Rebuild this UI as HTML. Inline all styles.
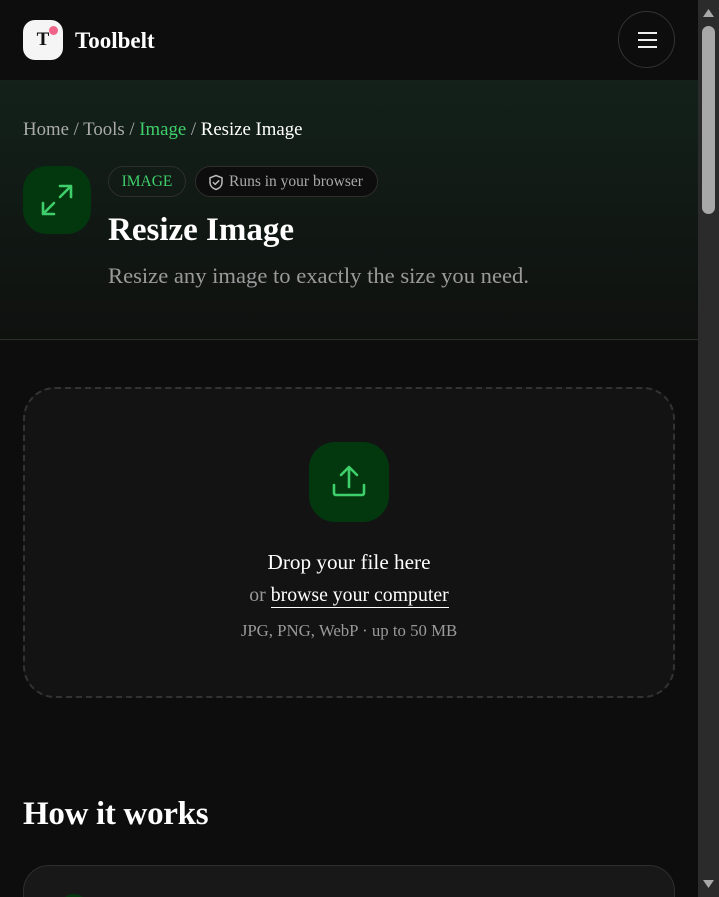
<!DOCTYPE html>
<html><head><meta charset="utf-8"><style>
*{box-sizing:border-box;margin:0;padding:0}
html,body{width:719px;height:897px;overflow:hidden;background:#0d0d0d;font-family:"Liberation Serif",serif;color:#fff}
.page{position:absolute;left:0;top:0;width:698px;height:897px;background:#0d0d0d;overflow:hidden}
.sb{position:absolute;left:698px;top:0;width:21px;height:897px;background:#2b2b2b}
.thumb{position:absolute;left:702px;top:26px;width:13px;height:188px;border-radius:7px;background:#a8a8a8}
header{position:absolute;left:0;top:0;width:698px;height:80px;background:#0d0d0d}
.logo{position:absolute;left:23px;top:20px;width:40px;height:40px;border-radius:12px;background:#f5f5f5;color:#111;font-weight:bold;font-size:19px;text-align:center;line-height:40px}
.dot{position:absolute;left:26px;top:6px;width:9px;height:9px;border-radius:50%;background:#f0648a}
.brand{position:absolute;left:75px;top:28px;font-size:23px;font-weight:bold}
.menu{position:absolute;left:618px;top:11px;width:57px;height:57px;border-radius:50%;border:1px solid #333}
.menu i{position:absolute;left:19px;width:19px;height:2px;background:#eee}
.hero{position:absolute;left:0;top:80px;width:698px;height:260px;background:linear-gradient(#13211a,#0f110f);border-bottom:1px solid #2e2e2e}
.bc{position:absolute;left:23px;top:39px;font-size:18.8px;color:#aaa}
.hi{position:absolute;left:23px;top:86px;width:68px;height:68px;border-radius:24px;background:#03380f}
.pill{position:absolute;top:86px;height:31px;border-radius:16px;border:1px solid #2e2e2e;font-size:15.5px;line-height:29px;padding:0 12px}
h1{position:absolute;left:108px;top:132px;font-size:33px;font-weight:bold}
.sub{position:absolute;left:108px;top:183px;font-size:22.6px;color:#9a9a9a}
.drop{position:absolute;left:23px;top:387px;width:652px;height:311px;border:2px dashed #333;border-radius:32px;background:#131313;text-align:center}
.ui{position:absolute;left:284px;top:53px;width:80px;height:80px;border-radius:26px;background:#03380f}
h2{position:absolute;left:23px;top:796px;font-size:33px;font-weight:bold;letter-spacing:-0.3px}
.card{position:absolute;left:23px;top:865px;width:652px;height:80px;border-radius:26px;border:1px solid #2e2e2e;background:#181818}
</style></head><body>
<div class="page">
<header>
<div class="logo">T<div class="dot"></div></div>
<div class="brand">Toolbelt</div>
<div class="menu"><i style="top:20px"></i><i style="top:27px"></i><i style="top:34px"></i></div>
</header>
<div class="hero">
<div class="bc">Home / Tools / <span style="color:#3fcf6a">Image</span> / <span style="color:#fff">Resize Image</span></div>
<div class="hi"><svg width="68" height="68" viewBox="0 0 68 68" fill="none" stroke="#3fcf6a" stroke-width="2.6" stroke-linecap="round" stroke-linejoin="round"><path d="M37 20h11v11M48 20L37 31M31 48H20V37M20 48l11-11"/></svg></div>
<div class="pill" style="left:108px;color:#3fcf6a;width:78px;text-align:center;padding:0">IMAGE</div>
<div class="pill" style="left:195px;color:#aaa;background:#0d0d0d;padding-left:33px;width:183px">
<svg style="position:absolute;left:12px;top:7px" width="16" height="17" viewBox="0 0 16 17" fill="none" stroke="#bbb" stroke-width="1.5" stroke-linejoin="round" stroke-linecap="round"><path d="M8 1.5l6 2.3v4.5c0 3.7-2.6 6.2-6 7.2-3.4-1-6-3.5-6-7.2V3.8z"/><path d="M5.3 8.5l1.9 1.9 3.6-3.6"/></svg>Runs in your browser</div>
<h1>Resize Image</h1>
<div class="sub">Resize any image to exactly the size you need.</div>
</div>
<div class="drop">
<div class="ui"><svg width="80" height="80" viewBox="0 0 80 80" fill="none" stroke="#3fcf6a" stroke-width="2.6" stroke-linecap="round" stroke-linejoin="round"><path d="M40 45V26M32 33l8-8 8 8M25 43v8a2 2 0 0 0 2 2h26a2 2 0 0 0 2-2v-8"/></svg></div>
<div style="position:absolute;left:0;right:0;top:161px;font-size:21.2px">Drop your file here</div>
<div style="position:absolute;left:0;right:0;top:195px;font-size:19.8px;color:#999">or <span style="color:#fff;border-bottom:1.5px solid #fff;padding-bottom:1px">browse your computer</span></div>
<div style="position:absolute;left:0;right:0;top:232px;font-size:16.8px;color:#999">JPG, PNG, WebP · up to 50 MB</div>
</div>
<h2>How it works</h2>
<div class="card"><div style="position:absolute;left:35px;top:28px;width:30px;height:30px;border-radius:50%;background:#03380f"></div></div>
</div>
<div class="sb"></div>
<div class="thumb"></div>
<svg style="position:absolute;left:702px;top:8px" width="13" height="10"><path d="M6.5 1L12 9H1z" fill="#a8a8a8"/></svg>
<svg style="position:absolute;left:702px;top:879px" width="13" height="10"><path d="M6.5 9L12 1H1z" fill="#a8a8a8"/></svg>
</body></html>
